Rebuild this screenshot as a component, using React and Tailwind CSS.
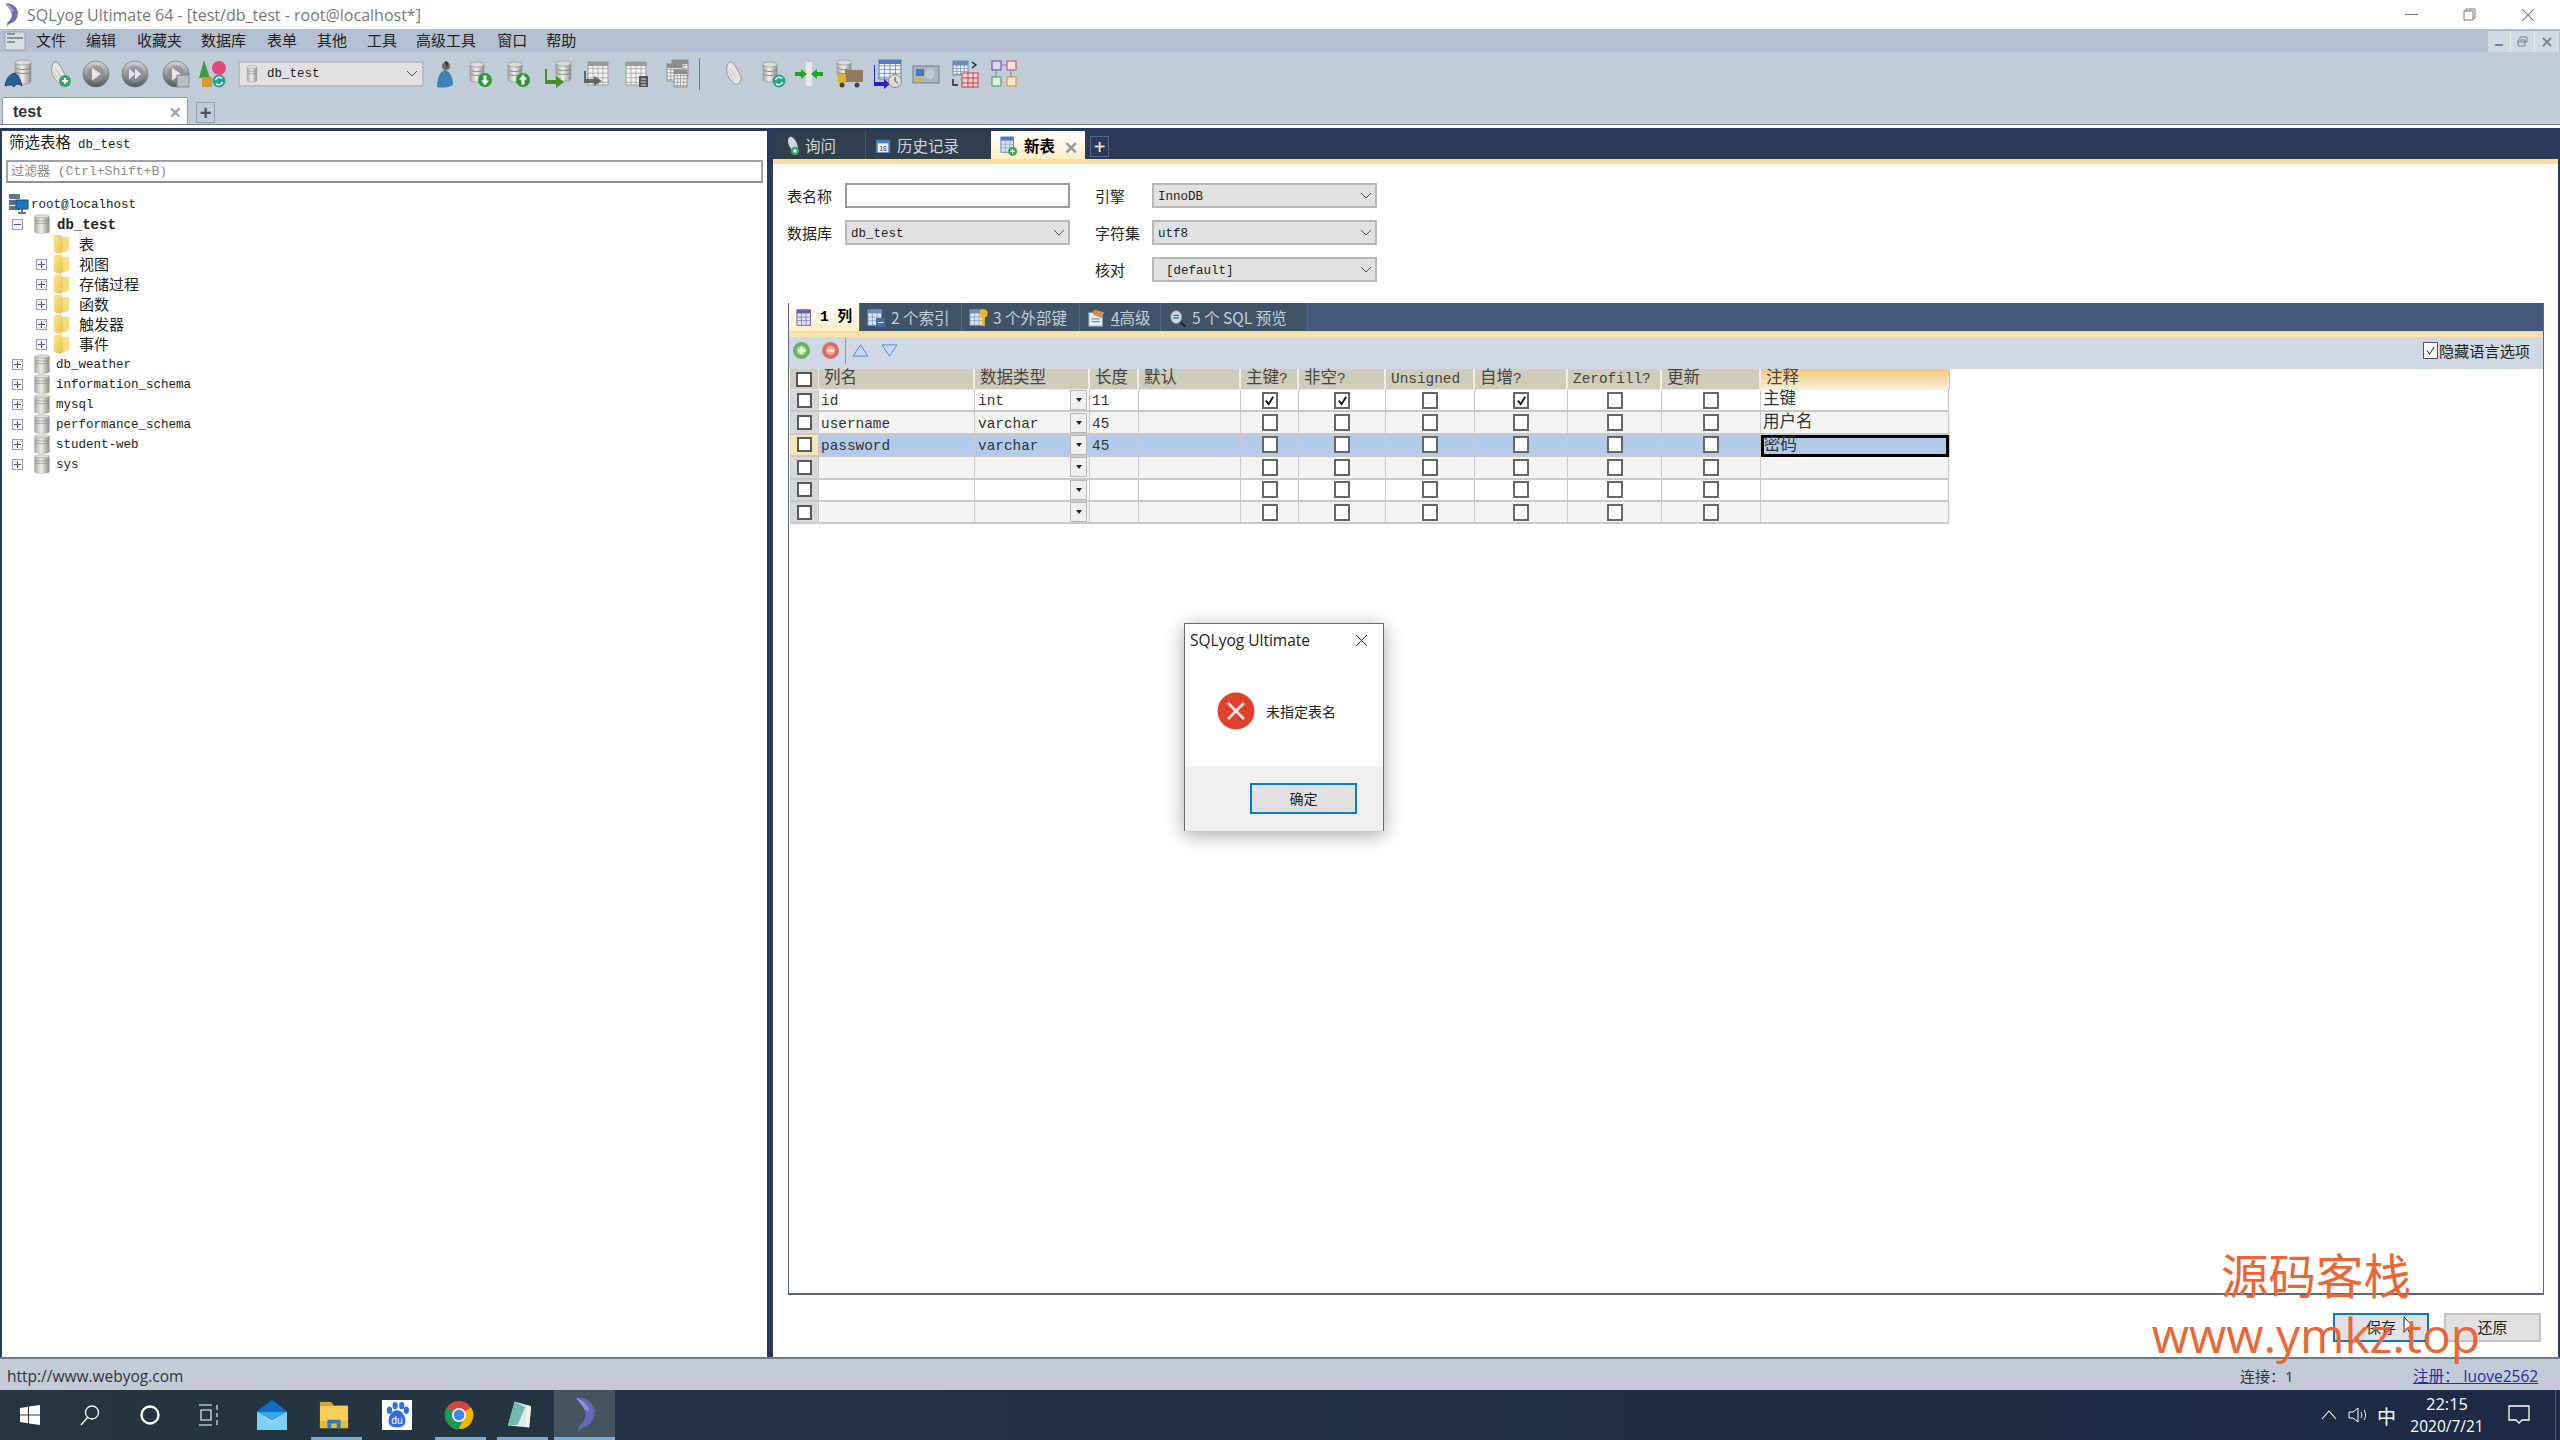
import React from "react";

const sans = "font-['Noto_Sans_CJK_SC',sans-serif]";
const mono = "font-['Liberation_Mono','Noto_Sans_CJK_SC',monospace]";

function Defs() {
  return (
    <svg className="absolute w-0 h-0">
      <defs>
        <linearGradient id="cyl" x1="0" x2="1" y1="0" y2="0">
          <stop offset="0" stopColor="#a9a9a4" />
          <stop offset="0.45" stopColor="#efefec" />
          <stop offset="1" stopColor="#8e8e8a" />
        </linearGradient>
        <linearGradient id="ball" x1="0" x2="0" y1="0" y2="1">
          <stop offset="0" stopColor="#d5d5d5" />
          <stop offset="1" stopColor="#55585c" />
        </linearGradient>
        <linearGradient id="fold" x1="0" x2="1" y1="0" y2="1">
          <stop offset="0" stopColor="#fbe58f" />
          <stop offset="1" stopColor="#e7c04f" />
        </linearGradient>
      </defs>
    </svg>
  );
}

const Cylinder = ({ x = 8, y = 3, w = 14, h = 20 }) => (
  <g>
    <path d={`M${x} ${y + 2.5}v${h - 5}c0 3.4 ${w} 3.4 ${w} 0v-${h - 5}z`} fill="url(#cyl)" stroke="#8d8d88" strokeWidth="0.6" />
    <ellipse cx={x + w / 2} cy={y + 2.5} rx={w / 2} ry="2.5" fill="#dcdcd8" stroke="#8d8d88" strokeWidth="0.6" />
    <path d={`M${x + 1} ${y + 8}c1 2 ${w - 3} 2 ${w - 2} 0M${x + 1} ${y + 12}c1 2 ${w - 3} 2 ${w - 2} 0`} fill="none" stroke="#85857f" strokeWidth="0.9" />
  </g>
);
const GreenArrow = ({ up }) => (
  <g>
    <circle cx="20" cy="21" r="7" fill="#2b9a33" />
    <path d={up ? "M20 15.5l4 5h-2.4v5h-3.2v-5h-2.400z" : "M20 26.500l4-5h-2.400v-5h-3.200v5h-2.400z"} fill="#fff" />
  </g>
);
const Refresh = () => (
  <g>
    <circle cx="21" cy="22" r="6.500" fill="#25a58b" />
    <path d="M17.500 21a3.800 3.800 0 0 1 6.500-1.500M24.500 23a3.800 3.800 0 0 1-6.500 1.500" stroke="#fff" strokeWidth="1.400" fill="none" />
  </g>
);
const Scroll = ({ plus }) => (
  <g>
    <path d="M10 3c3-1 6 5 8 9s4 6 3 9-4 5-6 4-7-7-8-11 0-10 3-11z" fill="#e5e5e2" stroke="#8e8e8a" strokeWidth="0.9" />
    <path d="M10 9l6 9M8 12l6 9" stroke="#bbb" strokeWidth="0.8" />
    {plus && <circle cx="20" cy="22" r="6" fill="#36a860" />}
    {plus && <path d="M20 19v6M17 22h6" stroke="#fff" strokeWidth="1.800" />}
  </g>
);
const Grid = ({ x = 5, y = 3, w = 20, h = 23, c = "#9a9a96" }) => (
  <g>
    <rect x={x} y={y} width={w} height={h} fill="#f3f3f0" stroke={c} />
    <rect x={x} y={y} width={w} height="4" fill={c} />
    {[1, 2, 3, 4].map((i) => (
      <path key={i} d={`M${x} ${y + (i * h) / 5 + 2}h${w}`} stroke={c} strokeWidth="0.7" />
    ))}
    {[1, 2, 3].map((i) => (
      <path key={i} d={`M${x + (i * w) / 4} ${y}v${h}`} stroke={c} strokeWidth="0.7" />
    ))}
  </g>
);
const Ball = ({ dbl, doc }) => (
  <g>
    <circle cx="15" cy="15" r="13" fill="url(#ball)" stroke="#666" strokeWidth="0.6" />
    <circle cx="15" cy="15" r="8.500" fill="#8c8f92" opacity="0.7" />
    {dbl ? (
      <path d="M9 9.500l6 5.500-6 5.500zM15 9.500l6 5.500-6 5.500z" fill="#e6e6e6" />
    ) : (
      <path d="M11 8.500l9 6.500-9 6.500z" fill="#e6e6e6" />
    )}
    {doc && <rect x="16" y="16" width="12" height="12" fill="#b9bcc0" stroke="#777" strokeWidth="0.7" />}
  </g>
);

const toolbarIcons = {
  conn: (
    <g>
      <Cylinder x={12} y={1} w={16} h={24} />
      <path d="M2 27c1-8 5-12 10-13 4 2 6 8 7 13-5-3-6-2-8 1-3-3-5-2-9-1z" fill="#2d5f97" stroke="#10305c" strokeWidth="0.7" />
    </g>
  ),
  doc: <Scroll plus />,
  play: <Ball />,
  dbl: <Ball dbl />,
  playdoc: <Ball doc />,
  shapes: (
    <g>
      <path d="M6 1l6 18H1z" fill="#3b9c3f" />
      <circle cx="21" cy="9" r="7" fill="#e2487c" />
      <rect x="4" y="18" width="10" height="10" fill="#d89c28" />
      <Refresh />
    </g>
  ),
  user: (
    <g>
      <circle cx="16" cy="7" r="4" fill="#706a66" />
      <path d="M15 2l3 1-1 7z" fill="#2c2c2c" />
      <path d="M7 28c0-9 3-16 8-17 5 1 8 8 8 15-5 3-11 3-16 2z" fill="#3b83b4" />
    </g>
  ),
  down: (
    <g>
      <Cylinder x={5} />
      <GreenArrow />
    </g>
  ),
  up: (
    <g>
      <Cylinder x={5} />
      <GreenArrow up />
    </g>
  ),
  impt: (
    <g>
      <Cylinder x={12} y={2} w={15} h={20} />
      <path d="M3 10v11h9v-4l8 6-8 6v-4H1V10z" fill="#4e8d24" />
    </g>
  ),
  tableArrow: (
    <g>
      <Grid />
      <path d="M3 12v8h8v-3l8 5-8 5v-3H1V12z" fill="#666" />
    </g>
  ),
  tableCalc: (
    <g>
      <Grid x={4} />
      <rect x="17" y="17" width="9" height="11" fill="#555" />
      <path d="M19 20h5M19 23h5M19 26h5" stroke="#ddd" />
    </g>
  ),
  stacked: (
    <g>
      <Grid x={10} y={1} w={16} h={17} c="#8d8d8a" />
      <Grid x={5} y={5} w={15} h={17} c="#8d8d8a" />
      <Grid x={12} y={11} w={13} h={17} c="#8d8d8a" />
    </g>
  ),
  scroll: <Scroll />,
  dbrefresh: (
    <g>
      <Cylinder x={5} />
      <Refresh />
    </g>
  ),
  sync: (
    <g>
      <path d="M15 1v28" stroke="#a4a4a4" strokeDasharray="2 2" />
      <rect x="12" y="3" width="6" height="24" fill="#e8e8e6" />
      <path d="M13 15l-6-5v3H1v4h6v3zM17 15l6-5v3h6v4h-6v3z" fill="#1fa71f" />
    </g>
  ),
  truck: (
    <g>
      <Cylinder x={3} y={1} w={14} h={17} />
      <rect x="11" y="11" width="18" height="12" fill="#8e7a5c" />
      <rect x="4" y="15" width="8" height="9" fill="#d9b32f" />
      <circle cx="8" cy="26" r="2.500" fill="#444" />
      <circle cx="23" cy="26" r="2.500" fill="#444" />
    </g>
  ),
  sched: (
    <g>
      <Grid x={6} y={1} w={22} h={19} c="#4f7ec2" />
      <path d="M2 6v17h9v-3l6 5-6 5v-3H1V6z" fill="#2c20c0" />
      <circle cx="22" cy="22" r="6.500" fill="#dcdcdc" stroke="#888" />
      <path d="M22 18v4l3 2" stroke="#555" fill="none" />
    </g>
  ),
  img: (
    <g>
      <rect x="2" y="7" width="26" height="17" fill="#aab6c6" stroke="#727e8e" />
      <rect x="5" y="10" width="8" height="7" fill="#4878b4" />
      <circle cx="19" cy="15" r="5" fill="#c4c9cf" />
      <rect x="5" y="18" width="8" height="4" fill="#d2b35a" />
    </g>
  ),
  schema: (
    <g>
      <Grid x={3} y={2} w={15} h={14} c="#6b8db5" />
      <path d="M22 3l4 3-4 3M3 20v6h5" stroke="#222" fill="none" strokeWidth="1.400" />
      <rect x="12" y="14" width="16" height="14" fill="#fbd7da" stroke="#d8303a" />
      <path d="M12 19h16M12 24h16M18 14v14M23 14v14" stroke="#d8303a" />
    </g>
  ),
  boxes: (
    <g fill="none" strokeWidth="1.200">
      <rect x="3" y="2" width="9" height="9" stroke="#6458c4" fill="#dcd8f2" />
      <rect x="18" y="2" width="9" height="9" stroke="#d15a6c" fill="#f6dde0" />
      <rect x="3" y="18" width="9" height="9" stroke="#5ca46c" fill="#dceede" />
      <rect x="18" y="18" width="9" height="9" stroke="#d99b42" fill="#f6e5c8" />
      <path d="M12 6h6M7 11v7M22 11v7" stroke="#8c8c8c" />
    </g>
  ),
};

const TI = ({ k, cls }) => (
  <svg viewBox="0 0 30 30" className={`w-[30px] h-[30px] shrink-0 ${cls}`}>
    {toolbarIcons[k]}
  </svg>
);

const Dolphin = ({ cls, c1 = "#6e6fc0", c2 = "#9a9ad8" }) => (
  <svg viewBox="0 0 24 36" className={cls}>
    <path d="M3 1c8-1 16 3 18 11 2 9-3 17-12 19l-4 4 1-6c6-4 8-11 5-17C9 8 6 5 3 1z" fill={c1} />
    <path d="M3 1c6 2 12 6 13 13l-5-2C10 8 6 5 3 1z" fill={c2} />
    <path d="M20 13l3-1-2 4z" fill={c1} />
  </svg>
);

const Box = ({ minus }) => (
  <span className="w-[11px] h-[11px] border border-[#9a9db5] bg-[#f4f4f8] flex items-center justify-center shrink-0 relative">
    <span className="w-[7px] h-px bg-[#555a80]" />
    {!minus && <span className="absolute w-px h-[7px] bg-[#555a80]" />}
  </span>
);

const SmallDb = () => (
  <svg viewBox="0 0 30 30" className="w-[20px] h-[20px] shrink-0">
    <Cylinder x={4} y={1} w={22} h={28} />
  </svg>
);
const Folder = () => (
  <svg viewBox="0 0 18 20" className="w-[18px] h-[20px] shrink-0">
    <path d="M1 1h7l2 2v15l-3 2-6-2z" fill="url(#fold)" />
    <path d="M10 3h6v13l-6 3z" fill="#f7dc80" />
  </svg>
);

const trees = ["视图", "存储过程", "函数", "触发器", "事件"];
const dbs = ["db_weather", "information_schema", "mysql", "performance_schema", "student-web", "sys"];

function LeftPanel() {
  return (
    <div className="w-[765px] ml-[2px] mt-[3px] bg-white flex flex-col shrink-0">
      <div className={`h-[26px] flex items-center pl-[7px] pt-[2px] text-[15.5px] text-[#222] ${mono}`}>
        筛选表格 <span className="ml-[7px] text-[12.5px]">db_test</span>
      </div>
      <div className={`mx-[4px] mt-[3px] h-[23px] border-2 border-[#a0a4aa] border-b-[#8e9298] flex items-center pl-[3px] text-[13px] text-[#8a8a8a] ${mono}`}>
        过滤器 (Ctrl+Shift+B)
      </div>
      <div className={`pt-[11px] text-[12.5px] text-[#222] ${mono}`}>
        <div className="h-5 flex items-center pl-[6px]">
          <svg viewBox="0 0 22 22" className="w-[22px] h-[22px] shrink-0 mr-px">
            <rect x="1" y="1" width="11" height="5" fill="#61748a" />
            <rect x="1" y="7" width="11" height="5" fill="#61748a" />
            <rect x="1" y="13" width="11" height="4" fill="#61748a" />
            <rect x="8" y="7" width="12" height="9" fill="#1c76c4" stroke="#244a70" />
            <path d="M14 16v3M10 20h8" stroke="#444" strokeWidth="1.500" />
          </svg>
          <span className="mt-[3px]">root@localhost</span>
        </div>
        <div className="h-5 flex items-center pl-[10px]">
          <Box minus />
          <span className="ml-[9px]"><SmallDb /></span>
          <span className="ml-[5px] mt-[3px] font-bold text-[14px]">db_test</span>
        </div>
        <div className="h-5 flex items-center pl-[51px]">
          <Folder />
          <span className={`ml-[8px] text-[15px] bg-[#f2f2f2] ${sans}`}>表</span>
        </div>
        {trees.map((t) => (
          <div key={t} className="h-5 flex items-center pl-[34px]">
            <Box />
            <span className="ml-[6px]"><Folder /></span>
            <span className={`ml-[8px] text-[15px] ${sans}`}>{t}</span>
          </div>
        ))}
        {dbs.map((d) => (
          <div key={d} className="h-5 flex items-center pl-[10px]">
            <Box />
            <span className="ml-[9px]"><SmallDb /></span>
            <span className="ml-[4px] mt-[3px]">{d}</span>
          </div>
        ))}
      </div>
    </div>
  );
}

const Chev = () => (
  <svg viewBox="0 0 12 8" className="w-[12px] h-[8px] shrink-0">
    <path d="M1 1l5 5 5-5" stroke="#555" strokeWidth="1" fill="none" />
  </svg>
);

const Select = ({ children, pad = "pl-[4px]" }) => (
  <div className={`h-[25px] border-2 border-[#b8b8b8] bg-[#e1e1e1] flex items-center justify-between pr-[3px] text-[12.5px] text-[#222] ${pad} ${mono}`}>
    <span className="mt-[3px]">{children}</span>
    <Chev />
  </div>
);
const Label = ({ children }) => <div className={`text-[15px] text-[#222] flex items-center pt-px ${sans}`}>{children}</div>;

const Cols = "grid grid-cols-[29px_156px_115px_49px_102px_58px_87px_89px_93px_94px_99px_188px]";

const Check = ({ on }) => (
  <span className="w-[16px] h-[17px] border-2 border-[#666] bg-white flex items-center justify-center shrink-0">
    {on && (
      <svg viewBox="0 0 12 12" className="w-[11px] h-[11px]">
        <path d="M2 6l3 4 5-8" stroke="#111" strokeWidth="2" fill="none" />
      </svg>
    )}
  </span>
);

const Big = ({ s }) => <span className="text-[16.500px]">{s}</span>;

const rowsData = [
  { n: "id", t: "int", l: "11", c: "主键", pk: 1, nn: 1, ai: 1, bg: "bg-white" },
  { n: "username", t: "varchar", l: "45", c: "用户名", bg: "bg-[#f4f4f4]" },
  { n: "password", t: "varchar", l: "45", c: "密码", bg: "bg-[#b2cbea]", sel: 1 },
  { bg: "bg-[#f4f4f4]" },
  { bg: "bg-white" },
  { bg: "bg-[#f4f4f4]" },
];

const headerCols = [
  [<Big s="列名" />],
  [<Big s="数据类型" />],
  [<Big s="长度" />],
  [<Big s="默认" />],
  [<Big s="主键" />, "?"],
  [<Big s="非空" />, "?"],
  ["Unsigned"],
  [<Big s="自增" />, "?"],
  ["Zerofill?"],
  [<Big s="更新" />],
];

function Table() {
  const cell = "border-r border-b-2 border-[#c9c9c9] flex items-center";
  return (
    <div className={`ml-px w-[1160px] ${mono} text-[14.4px] leading-[16px] text-[#333]`}>
      <div className={`${Cols} h-[21px] bg-[#cfccbb] text-[#444]`}>
        <div className="border-r border-b border-[#e8e8e2] flex items-center justify-center">
          <span className="w-[16px] h-[15px] border-2 border-[#555] bg-white" />
        </div>
        {headerCols.map((h, i) => (
          <div key={i} className="border-r-2 border-b border-[#eeeeea] flex items-center pl-[5px] whitespace-nowrap">
            {h[0]}
            {h[1]}
          </div>
        ))}
        <div className="flex items-center pl-[5px] border-b border-[#eeeeea] bg-linear-to-b from-[#f4c877] to-[#f8efd6]">
          <Big s="注释" />
        </div>
      </div>
      {rowsData.map((r, i) => (
        <div key={i} className={`${Cols} h-[22.4px] ${r.bg}`}>
          <div className={`${cell} justify-center ${r.sel ? "bg-[#f6e6b8]" : "bg-[#d8d8d8]"}`}>
            <span className="w-[15px] h-[15px] border-2 border-[#5a5a5a] bg-white" />
          </div>
          <div className={`${cell} pl-[2px] pt-[2px]`}>{r.n}</div>
          <div className={`${cell} pl-[3px] justify-between`}>
            <span className="mt-[2px]">{r.t}</span>
            <span className="w-[17px] h-[20px] mr-[2px] border border-[#b8b8b8] bg-[#f0f0f0] flex items-center justify-center">
              <span className="w-0 h-0 border-l-[3px] border-r-[3px] border-t-[4px] border-l-transparent border-r-transparent border-t-[#222]" />
            </span>
          </div>
          <div className={`${cell} pl-[2px] pt-[2px]`}>{r.l}</div>
          <div className={cell} />
          <div className={`${cell} justify-center`}><Check on={r.pk} /></div>
          <div className={`${cell} justify-center`}><Check on={r.nn} /></div>
          <div className={`${cell} justify-center`}><Check /></div>
          <div className={`${cell} justify-center`}><Check on={r.ai} /></div>
          <div className={`${cell} justify-center`}><Check /></div>
          <div className={`${cell} justify-center`}><Check /></div>
          <div className={`${r.sel ? "border-[3px] border-black pl-0" : "border-b-2 border-r border-[#c9c9c9] pl-[2px]"} flex items-center text-[16.5px]`}>{r.c}</div>
        </div>
      ))}
    </div>
  );
}

const TabIcon = ({ k }) => {
  if (k === "q")
    return (
      <svg viewBox="0 0 20 24" className="w-[17px] h-[20px] shrink-0">
        <path d="M8 1c3 0 7 6 8 10s0 6-3 7-7-5-8-9 0-8 3-8z" fill="#d4d6da" />
        <circle cx="13" cy="18" r="5" fill="#3aa55c" />
        <path d="M13 15.500v5M10.500 18h5" stroke="#fff" strokeWidth="1.400" />
      </svg>
    );
  if (k === "h")
    return (
      <svg viewBox="0 0 18 18" className="w-[16px] h-[16px] shrink-0">
        <rect x="1" y="2" width="16" height="15" rx="1" fill="#3e7fc4" />
        <rect x="3" y="6" width="12" height="10" fill="#f2f2f2" />
        <text x="9" y="14.500" fontSize="7.500" textAnchor="middle" fill="#333">18</text>
      </svg>
    );
  return (
    <svg viewBox="0 0 20 22" className="w-[18px] h-[20px] shrink-0">
      <rect x="1" y="1" width="14" height="17" fill="#d7e2f1" stroke="#5f83b8" />
      <rect x="1" y="1" width="14" height="4" fill="#4b79bd" />
      <path d="M1 9h14M1 13h14M6 5v13M11 5v13" stroke="#8fa7cf" strokeWidth="0.8" />
      <circle cx="14" cy="17" r="5" fill="#3aa55c" />
      <path d="M14 14.500v5M11.500 17h5" stroke="#fff" strokeWidth="1.400" />
    </svg>
  );
};

const InnerIcon = ({ k }) => {
  const table = (c) => (
    <g>
      <rect x="1" y="2" width="15" height="17" fill="#dfe6f2" stroke={c} />
      <rect x="1" y="2" width="15" height="4" fill={c} />
      <path d="M1 10h15M1 14h15M6 6v13M11 6v13" stroke={c} strokeWidth="0.7" />
    </g>
  );
  return (
    <svg viewBox="0 0 22 22" className="w-[20px] h-[20px] shrink-0">
      {k === 1 && table("#6f5f9e")}
      {k === 2 && (
        <g>
          {table("#6f8fb8")}
          <rect x="10" y="11" width="10" height="10" fill="#3a6cb0" />
          <path d="M12 16h6" stroke="#fff" />
        </g>
      )}
      {k === 3 && (
        <g>
          {table("#6f8fb8")}
          <circle cx="16" cy="6" r="4.500" fill="#e5b828" />
          <rect x="14.500" y="8" width="3" height="12" fill="#e5b828" />
        </g>
      )}
      {k === 4 && (
        <g>
          <rect x="2" y="5" width="15" height="15" fill="#eaeaea" stroke="#7e98bc" />
          <path d="M5 5l4-3 10 3-3 6-8-3z" fill="#c89350" />
          <path d="M5 12h9M5 15h9" stroke="#5b6c88" />
        </g>
      )}
      {k === 5 && (
        <g>
          <ellipse cx="9" cy="10" rx="6" ry="7" fill="#cfd7e2" stroke="#8b98ac" />
          <path d="M6 8h6M6 11h6" stroke="#3d6fb2" strokeWidth="1.400" />
          <path d="M14 16l5 4" stroke="#222" strokeWidth="2" />
        </g>
      )}
    </svg>
  );
};

function InnerTab({ k, active, w, children }) {
  return (
    <div
      className={`${w} h-full flex items-center pl-[7px] pt-[2px] gap-[4px] whitespace-nowrap border-r border-[#55678a] ${
        active
          ? `bg-linear-to-b from-white to-[#fdeec3] text-black font-bold ${mono} text-[14.5px]`
          : `bg-[#3f5468] text-[#c6ced9] ${sans} text-[15.5px]`
      }`}
    >
      <InnerIcon k={k} />
      <span>{children}</span>
    </div>
  );
}

function RightPanel() {
  return (
    <div className="flex-1 flex flex-col mr-[2px] min-w-0">
      <div className={`h-[31px] flex items-end pl-[2px] text-[15.5px] ${sans}`}>
        <div className="w-[91px] h-[28px] bg-[#2f3f4d] text-[#cfd6de] flex items-center pl-[9px] pt-[2px] gap-[4px] border-r border-[#44546a]">
          <TabIcon k="q" />询问
        </div>
        <div className="w-[125px] h-[28px] bg-[#2f3f4d] text-[#cfd6de] flex items-center pl-[9px] pt-[2px] gap-[6px]">
          <TabIcon k="h" />历史记录
        </div>
        <div className="w-[94px] h-[28px] bg-linear-to-b from-white to-[#fdeec3] text-black font-bold flex items-center pl-[9px] pt-[2px] gap-[6px]">
          <TabIcon k="n" />新表
          <span className="ml-[3px] text-[#8d97ab] text-[17px] font-bold leading-none">✕</span>
        </div>
        <div className="ml-[5px] mb-[2px] w-[19px] h-[21px] border border-[#54688a] flex items-center justify-center text-white text-[20px] leading-none font-['Liberation_Sans',sans-serif]">
          +
        </div>
      </div>
      <div className="h-[5px] bg-[#f9dfa0]" />
      <div className="flex-1 bg-white flex flex-col min-h-0">
        <div className="grid grid-cols-[58px_225px_25px_57px_225px] grid-rows-[25px_25px_25px] gap-y-[12px] pt-[19px] pl-[14px]">
          <Label>表名称</Label>
          <div className="border-2 border-[#9a9a9a] bg-white" />
          <div />
          <Label>引擎</Label>
          <Select>InnoDB</Select>
          <Label>数据库</Label>
          <Select>db_test</Select>
          <div />
          <Label>字符集</Label>
          <Select>utf8</Select>
          <div />
          <div />
          <div />
          <Label>核对</Label>
          <Select pad="pl-[12px]">[default]</Select>
        </div>
        <div className="flex-1 mt-[21px] ml-[15px] mr-[14px] border-x border-b-2 border-l-[#5c6684] border-r-[#5c6684] border-b-[#5c6684] flex flex-col min-h-0">
          <div className="h-[28px] bg-[#44587a] flex items-stretch shrink-0">
            <InnerTab k={1} active w="w-[71px]">1 列</InnerTab>
            <InnerTab k={2} w="w-[102px]">2 个索引</InnerTab>
            <InnerTab k={3} w="w-[118px]">3 个外部键</InnerTab>
            <InnerTab k={4} w="w-[81px]"><span className="underline">4</span>高级</InnerTab>
            <InnerTab k={5} w="w-[147px]">5 个 SQL 预览</InnerTab>
          </div>
          <div className="h-[6px] bg-linear-to-b from-[#f6dd98] to-[#fae6b4] shrink-0" />
          <div className="h-[32px] bg-[#d0d8e3] flex items-center pl-[3px] pb-[5px] shrink-0">
            <svg viewBox="0 0 20 20" className="w-[19px] h-[19px] shrink-0">
              <circle cx="10" cy="10" r="8.500" fill="#5fb95a" stroke="#8a9a8a" />
              <circle cx="10" cy="10" r="5" fill="#a4e09a" />
              <path d="M10 6.500v7M6.500 10h7" stroke="#fff" strokeWidth="2" />
            </svg>
            <svg viewBox="0 0 20 20" className="w-[19px] h-[19px] ml-[10px] shrink-0">
              <circle cx="10" cy="10" r="8.500" fill="#e8645e" stroke="#a88" />
              <circle cx="10" cy="10" r="5" fill="#f5a8a0" />
              <path d="M6.500 10h7" stroke="#fff" strokeWidth="2" />
            </svg>
            <span className="w-px h-[26px] bg-[#8b95a5] ml-[5px]" />
            <svg viewBox="0 0 18 14" className="w-[17px] h-[13px] ml-[6px] shrink-0">
              <path d="M9 1l8 12H1z" fill="#c8daf0" stroke="#4a86c8" />
            </svg>
            <svg viewBox="0 0 18 14" className="w-[17px] h-[13px] ml-[12px] shrink-0">
              <path d="M9 13L17 1H1z" fill="#c8daf0" stroke="#4a86c8" />
            </svg>
            <div className={`ml-auto mr-[13px] flex items-center text-[15.2px] text-[#222] ${sans}`}>
              <span className="w-[15px] h-[17px] border border-[#555] bg-white flex items-center justify-center mr-px">
                <svg viewBox="0 0 12 12" className="w-[11px] h-[11px]">
                  <path d="M2 6l3 4 5-8" stroke="#333" strokeWidth="1.100" fill="none" />
                </svg>
              </span>
              隐藏语言选项
            </div>
          </div>
          <Table />
        </div>
        <div className={`h-[62px] shrink-0 flex justify-end items-start pt-[18px] pr-[17px] gap-[15px] text-[15px] text-[#222] ${sans}`}>
          <div className="w-[96px] h-[29px] border-2 border-[#0a78d4] bg-[#e1e1e1] flex items-center justify-center">保存</div>
          <div className="w-[97px] h-[29px] border-2 border-[#c4c4c4] bg-[#e1e1e1] flex items-center justify-center">还原</div>
        </div>
      </div>
    </div>
  );
}

function TaskIcons() {
  return (
    <div className="flex items-center h-full">
      <svg viewBox="0 0 20 20" className="w-[20px] h-[20px] ml-[20px] shrink-0 fill-white">
        <path d="M0 3l8-1.200V9.500H0zM9 1.600L20 0v9.500H9zM0 10.500h8v7.700L0 17zM9 10.500h11V20L9 18.400z" />
      </svg>
      <svg viewBox="0 0 22 22" className="w-[22px] h-[22px] ml-[39px] shrink-0" fill="none" stroke="#fff" strokeWidth="1.300">
        <circle cx="13" cy="8.500" r="6.500" />
        <path d="M8.500 13.500L2 21" />
      </svg>
      <svg viewBox="0 0 22 22" className="w-[22px] h-[22px] ml-[38px] shrink-0" fill="none" stroke="#fff" strokeWidth="2.400">
        <circle cx="11" cy="11" r="8.500" />
      </svg>
      <svg viewBox="0 0 22 22" className="w-[22px] h-[24px] ml-[37px] shrink-0" fill="none" stroke="#fff" strokeWidth="1.100">
        <path d="M1 1h13M1 21h13M3 6h10v10H3zM19 1v5M19 9v4M19 16v5" />
      </svg>
      <svg viewBox="0 0 32 32" className="w-[32px] h-[34px] ml-[36px] shrink-0">
        <path d="M16 1l15 11v19H1V12z" fill="#0d6ec4" />
        <path d="M1 13h30v18H1z" fill="#35a5ee" />
        <path d="M1 13l15 10 15-10v18H1z" fill="#7fd0f8" />
        <path d="M1 13l15 10 15-10-15 9z" fill="#fff" />
      </svg>
      <svg viewBox="0 0 32 32" className="w-[30px] h-[32px] ml-[31px] shrink-0">
        <path d="M1 2h12l3 4H1z" fill="#d9a63a" />
        <rect x="1" y="6" width="30" height="24" fill="#f7cf56" />
        <rect x="1" y="22" width="30" height="8" fill="#e8ba3c" />
        <path d="M9 30v-9h14v9h-4v-5h-6v5z" fill="#2f79bd" />
      </svg>
      <svg viewBox="0 0 32 32" className="w-[30px] h-[30px] ml-[33px] shrink-0">
        <rect width="32" height="32" fill="#fff" />
        <ellipse cx="8" cy="11" rx="2.800" ry="4" fill="#306fe3" />
        <ellipse cx="14" cy="6" rx="2.800" ry="3.800" fill="#306fe3" />
        <ellipse cx="21" cy="6" rx="2.800" ry="3.800" fill="#306fe3" />
        <ellipse cx="26" cy="11" rx="2.800" ry="4" fill="#306fe3" />
        <path d="M16 11c5 0 9 6 9 11s-3 7-9 7-9-2-9-7 4-11 9-11z" fill="#306fe3" />
        <text x="16" y="26" fontSize="11" textAnchor="middle" fill="#fff" fontFamily="Liberation Sans">du</text>
      </svg>
      <svg viewBox="0 0 32 32" className="w-[30px] h-[30px] ml-[32px] shrink-0">
        <circle cx="16" cy="16" r="15" fill="#db4437" />
        <path d="M16 16l13-8a15 15 0 0 1-13 23z" fill="#f4b400" />
        <path d="M4 24l12-8 7 0-8 16a15 15 0 0 1-11-8z" fill="#0f9d58" />
        <path d="M16 16L3 24A15 15 0 0 1 3 8z" fill="#0f9d58" />
        <circle cx="16" cy="16" r="7.500" fill="#fff" />
        <circle cx="16" cy="16" r="5.800" fill="#4285f4" />
      </svg>
      <svg viewBox="0 0 28 32" className="w-[27px] h-[32px] ml-[32px] shrink-0">
        <path d="M9 2l17 5-2 22-22-2z" fill="#dde8ea" />
        <path d="M9 2L2 27l10-1 8-18z" fill="#74b7ad" />
        <path d="M22 6l4 1-2 22-4-1z" fill="#f1f1e8" />
      </svg>
      <div className="w-[61px] h-full bg-[#45555f] ml-[21px] flex items-center justify-center shrink-0">
        <Dolphin cls="w-[24px] h-[36px]" c1="#6567b8" c2="#9294d8" />
      </div>
    </div>
  );
}

export default function App() {
  return (
    <div className={`w-[2560px] h-[1440px] flex flex-col overflow-hidden relative bg-white ${sans}`}>
      <Defs />
      {/* title bar */}
      <div className="h-[29px] bg-white flex items-center shrink-0">
        <Dolphin cls="w-[17px] h-[24px] ml-[3px] shrink-0" c1="#6c6cb4" c2="#a0a0cc" />
        <span className="ml-[7px] text-[16px] text-[#777] font-['Open_Sans',sans-serif] whitespace-nowrap">
          SQLyog Ultimate 64 - [test/db_test - root@localhost*]
        </span>
        <div className="ml-auto flex items-center shrink-0">
          <span className="w-[13px] h-px bg-[#777] mr-[45px]" />
          <svg viewBox="0 0 13 13" className="w-[13px] h-[13px] mr-[45px]" fill="none" stroke="#777">
            <path d="M3 3V1h9v9h-2M1 3h9v9H1z" />
          </svg>
          <svg viewBox="0 0 13 13" className="w-[14px] h-[14px] mr-[25px]" fill="none" stroke="#777">
            <path d="M1 1l11 11M12 1L1 12" />
          </svg>
        </div>
      </div>
      {/* menu bar */}
      <div className="h-[23px] bg-[#b4bfd1] flex items-center shrink-0 text-[15px] text-[#222]">
        <svg viewBox="0 0 22 22" className="w-[22px] h-[22px] ml-[4px] shrink-0">
          <rect x="1" y="2" width="20" height="18" fill="#d9dfe6" stroke="#97a3b2" />
          <path d="M3 4h8M3 8h16M3 12h8" stroke="#6c7888" strokeWidth="1.500" />
        </svg>
        {[
          ["文件", "ml-[10px]"], ["编辑", "ml-[20px]"], ["收藏夹", "ml-[21px]"], ["数据库", "ml-[19px]"],
          ["表单", "ml-[21px]"], ["其他", "ml-[20px]"], ["工具", "ml-[20px]"], ["高级工具", "ml-[19px]"],
          ["窗口", "ml-[21px]"], ["帮助", "ml-[19px]"],
        ].map(([t, c]) => (
          <span key={t} className={`${c} whitespace-nowrap`}>{t}</span>
        ))}
        <div className="ml-auto h-[21px] self-end flex text-[#8a8f9a]">
          <span className="w-[23px] bg-[#d3d9e3] flex items-center justify-center border-r border-[#e8ecf0]">
            <span className="w-[8px] h-[2px] bg-[#77808c] mt-[6px]" />
          </span>
          <span className="w-[24px] bg-[#d3d9e3] flex items-center justify-center border-r border-[#e8ecf0]">
            <svg viewBox="0 0 11 11" className="w-[11px] h-[11px]" fill="none" stroke="#77808c">
              <path d="M3 3V1h7v5H8M1 4h7v6H1zM1 6h7" />
            </svg>
          </span>
          <span className="w-[24px] bg-[#d3d9e3] flex items-center justify-center mr-[1px]">
            <svg viewBox="0 0 11 11" className="w-[10px] h-[10px]" fill="none" stroke="#77808c" strokeWidth="2.200">
              <path d="M1 1l9 9M10 1l-9 9" />
            </svg>
          </span>
        </div>
      </div>
      {/* toolbar */}
      <div className="h-[43px] bg-[#c1ccd9] flex items-center shrink-0">
        <TI k="conn" cls="ml-[3px]" />
        <TI k="doc" cls="ml-[12px]" />
        <TI k="play" cls="ml-[6px]" />
        <TI k="dbl" cls="ml-[9px]" />
        <TI k="playdoc" cls="ml-[11px]" />
        <TI k="shapes" cls="ml-[7px]" />
        <div className={`ml-[10px] w-[186px] h-[26px] bg-[#e1e1e1] border-2 border-[#b8bec8] flex items-center pr-[4px] text-[12.5px] text-[#222] ${mono} shrink-0`}>
          <svg viewBox="0 0 30 30" className="w-[18px] h-[22px] ml-[3px] shrink-0">
            <Cylinder x={7} y={1} w={16} h={27} />
          </svg>
          <span className="ml-[6px] mt-[2px]">db_test</span>
          <span className="ml-auto"><Chev /></span>
        </div>
        <TI k="user" cls="ml-[6px]" />
        <TI k="down" cls="ml-[5px]" />
        <TI k="up" cls="ml-[8px]" />
        <TI k="impt" cls="ml-[11px]" />
        <TI k="tableArrow" cls="ml-[9px]" />
        <TI k="tableCalc" cls="ml-[9px]" />
        <TI k="stacked" cls="ml-[10px]" />
        <span className="w-px h-[32px] bg-[#6e7884] ml-[7px] shrink-0" />
        <TI k="scroll" cls="ml-[20px]" />
        <TI k="dbrefresh" cls="ml-[8px]" />
        <TI k="sync" cls="ml-[6px]" />
        <TI k="truck" cls="ml-[10px]" />
        <TI k="sched" cls="ml-[9px]" />
        <TI k="img" cls="ml-[8px]" />
        <TI k="schema" cls="ml-[9px]" />
        <TI k="boxes" cls="ml-[9px]" />
      </div>
      {/* connection tabs */}
      <div className="h-[30px] bg-[#c1ccd9] flex items-end pl-[2px] shrink-0 border-b border-[#77808a]">
        <div className="w-[186px] h-[27px] bg-white border border-b-0 border-[#8f98a6] rounded-t-[2px] flex items-center pl-[10px] pr-[5px] pt-[2px] justify-between font-['Liberation_Sans',sans-serif] font-bold text-[16px] text-[#333]">
          test
          <span className="text-[#96a0b0] text-[15px] leading-none">✕</span>
        </div>
        <div className="ml-[8px] mb-[1px] w-[19px] h-[21px] border border-[#97a1ae] flex items-center justify-center text-[#4a5466] text-[20px] leading-none font-['Liberation_Sans',sans-serif] font-bold">
          +
        </div>
      </div>
      <div className="h-[3px] bg-white shrink-0" />
      {/* main */}
      <div className="flex-1 bg-[#2b3a58] flex min-h-0 gap-[6px]">
        <LeftPanel />
        <RightPanel />
      </div>
      {/* status bar */}
      <div className="h-[33px] pt-[4px] bg-[#c3cbd9] border-t-2 border-[#707a8a] shrink-0 flex items-center pl-[7px] font-['Open_Sans','Noto_Sans_CJK_SC',sans-serif] text-[15.5px] text-[#333]">
        <span className="w-[183px] whitespace-nowrap">http://www.webyog.com</span>
        <span className="ml-[2050px] w-[100px] whitespace-nowrap text-[15px]">连接：1</span>
        <span className="ml-[73px] underline text-[#2b2b9e] whitespace-nowrap text-[15.5px]">注册： luove2562</span>
      </div>
      {/* taskbar */}
      <div className="h-[50px] shrink-0 bg-linear-to-r from-[#26363f] to-[#1c2a46] flex items-center text-white relative">
        <TaskIcons />
        <span className="absolute left-[311px] bottom-0 w-[51px] h-[3px] bg-[#76aedb]" />
        <span className="absolute left-[435px] bottom-0 w-[51px] h-[3px] bg-[#76aedb]" />
        <span className="absolute left-[497px] bottom-0 w-[51px] h-[3px] bg-[#76aedb]" />
        <span className="absolute left-[554px] bottom-0 w-[61px] h-[3px] bg-[#76aedb]" />
        <div className="ml-auto flex items-center h-full">
          <svg viewBox="0 0 16 10" className="w-[16px] h-[10px] shrink-0" fill="none" stroke="#fff" strokeWidth="1.100">
            <path d="M1 9l7-8 7 8" />
          </svg>
          <svg viewBox="0 0 20 18" className="w-[20px] h-[18px] ml-[11px] shrink-0" fill="none" stroke="#fff">
            <path d="M1 6h4l5-4v14l-5-4H1zM13 6c1 2 1 4 0 6M16 4c2 3 2 7 0 10" />
          </svg>
          <span className="ml-[9px] text-[19px] leading-none">中</span>
          <div className="ml-[3px] w-[96px] flex flex-col items-center leading-[23px] font-['Open_Sans',sans-serif]">
            <span className="text-[16.5px]">22:15</span>
            <span className="text-[15.5px]">2020/7/21</span>
          </div>
          <svg viewBox="0 0 22 20" className="w-[22px] h-[20px] ml-[13px] shrink-0" fill="none" stroke="#fff" strokeWidth="1.300">
            <path d="M1 1h20v14h-7l-3 3-3-3H1z" />
          </svg>
          <span className="w-px h-full bg-[#4d5a70] ml-[25px] mr-[4px]" />
        </div>
      </div>

      {/* dialog */}
      <div className="absolute left-[1184px] top-[623px] w-[200px] h-[208px] bg-white border border-[#6a6a6a] border-b-0 shadow-[0_4px_18px_rgba(0,0,0,0.35)] flex flex-col">
        <div className="h-[33px] flex items-center pl-[5px] pr-[15px] justify-between text-[15.5px] text-[#222] font-['Open_Sans',sans-serif]">
          SQLyog Ultimate
          <svg viewBox="0 0 14 14" className="w-[13px] h-[13px]" fill="none" stroke="#222">
            <path d="M1 1l12 12M13 1L1 13" />
          </svg>
        </div>
        <div className="h-[109px] flex items-start pl-[32px] pt-[35px]">
          <svg viewBox="0 0 38 38" className="w-[38px] h-[38px] shrink-0">
            <circle cx="19" cy="19" r="18.500" fill="#e0412a" />
            <path d="M11 11l16 16M27 11L11 27" stroke="#fce4e0" strokeWidth="2.800" />
          </svg>
          <span className="ml-[11px] mt-[9px] text-[14px] text-[#222] whitespace-nowrap">未指定表名</span>
        </div>
        <div className="flex-1 bg-[#f0f0f0] flex items-start justify-end pr-[26px] pt-[17px]">
          <div className="w-[107px] h-[31px] bg-[#e1e1e1] border-2 border-[#0a78d4] flex items-center justify-center text-[14px] text-[#222]">确定</div>
        </div>
      </div>

      {/* cursor */}
      <svg viewBox="0 0 14 22" className="absolute left-[2403px] top-[1316px] w-[13px] h-[20px]">
        <path d="M1 1v17l4-4 3 6 2-1-3-6h5z" fill="#fff" stroke="#111" />
      </svg>

      {/* watermark */}
      <div className="absolute left-[2150px] top-[1243px] w-[332px] flex flex-col items-center text-[#ec6534] pointer-events-none">
        <span className="text-[47.5px] leading-[62px] font-['Noto_Sans_CJK_SC',sans-serif] whitespace-nowrap">源码客栈</span>
        <span className="text-[48px] leading-[60px] font-['Open_Sans',sans-serif] whitespace-nowrap">www.ymkz.top</span>
      </div>
    </div>
  );
}
